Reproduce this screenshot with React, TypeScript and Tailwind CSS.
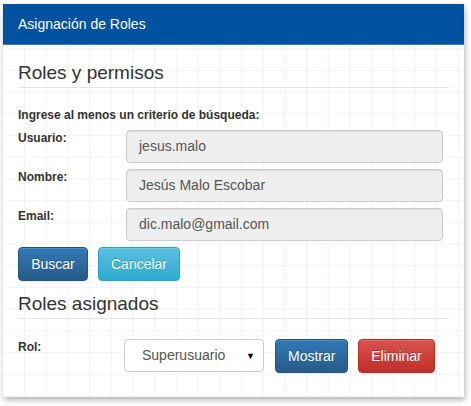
import React from 'react';

const font = "font-['Liberation_Sans',Arial,sans-serif]";

interface FieldRow {
  label: string;
  value: string;
}

const fields: FieldRow[] = [
  { label: 'Usuario:', value: 'jesus.malo' },
  { label: 'Nombre:', value: 'Jesús Malo Escobar' },
  { label: 'Email:', value: 'dic.malo@gmail.com' },
];

const btn =
  'h-[34px] rounded-[4px] border px-[12px] text-[14px] text-white [text-shadow:0_-1px_0_rgba(0,0,0,0.2)] shadow-[inset_0_1px_0_rgba(255,255,255,0.15),0_1px_1px_rgba(0,0,0,0.075)]';
const primary = 'border-[#245580] bg-[linear-gradient(to_bottom,#337ab7,#265a88)]';
const info = 'border-[#28a4c9] bg-[linear-gradient(to_bottom,#5bc0de,#2aabd2)]';
const danger = 'border-[#b92c28] bg-[linear-gradient(to_bottom,#d9534f,#c12e2a)]';

export default function App() {
  return (
    <div className={`${font} h-[406px] w-[471px] bg-white pl-[3px] pt-[4px]`}>
      <div className="w-[461px] overflow-hidden bg-white bg-[linear-gradient(to_right,#f2f2fa_1px,transparent_1px),linear-gradient(to_bottom,#f2f2fa_1px,transparent_1px)] bg-[length:21.7px_21.7px] bg-[position:21px_1px] shadow-[1px_3px_6px_rgba(0,0,0,0.3)]">
        {/* header */}
        <div className="flex h-[41px] items-center border-b border-[#3a78b8] bg-[#0052a0] px-[15px] text-[14px] text-white">
          Asignación de Roles
        </div>

        <div className="px-[15px] pb-[24px] pt-[17px] text-[#333]">
          <h3 className="border-b border-[#e5e5e5] pb-[3px] text-[19px] leading-[22px]">Roles y permisos</h3>

          <p className="mt-[19px] text-[12px] font-bold leading-[16px]">
            Ingrese al menos un criterio de búsqueda:
          </p>

          <div className="mt-[7px] flex flex-col gap-[6px]">
            {fields.map((f) => (
              <div key={f.label} className="flex">
                <div className="w-[108px] text-[12px] font-bold leading-[16px]">{f.label}</div>
                <div className="flex h-[33px] w-[317px] items-center rounded-[4px] border border-[#ccc] bg-[#eee] px-[12px] text-[14px] text-[#555] shadow-[inset_0_1px_1px_rgba(0,0,0,0.075)]">
                  {f.value}
                </div>
              </div>
            ))}
          </div>

          <div className="mt-[6px] flex gap-[10px]">
            <button className={`${btn} ${primary} w-[70px]`}>Buscar</button>
            <button className={`${btn} ${info} w-[82px]`}>Cancelar</button>
          </div>

          <h3 className="mt-[12px] border-b border-[#e5e5e5] pb-[3px] text-[19px] leading-[22px]">Roles asignados</h3>

          <div className="mt-[20px] flex">
            <div className="w-[106px] text-[12px] font-bold leading-[16px]">Rol:</div>
            <div className="relative flex h-[33px] w-[140px] items-center rounded-[4px] border border-[#ccc] bg-white pl-[17px] text-[14px] text-[#555]">
              Superusuario
              <span className="absolute right-[8px] top-[10px] text-[9px] text-black">▼</span>
            </div>
            <button className={`${btn} ${primary} ml-[11px] w-[73px]`}>Mostrar</button>
            <button className={`${btn} ${danger} ml-[10px] w-[77px]`}>Eliminar</button>
          </div>
        </div>
      </div>
    </div>
  );
}
